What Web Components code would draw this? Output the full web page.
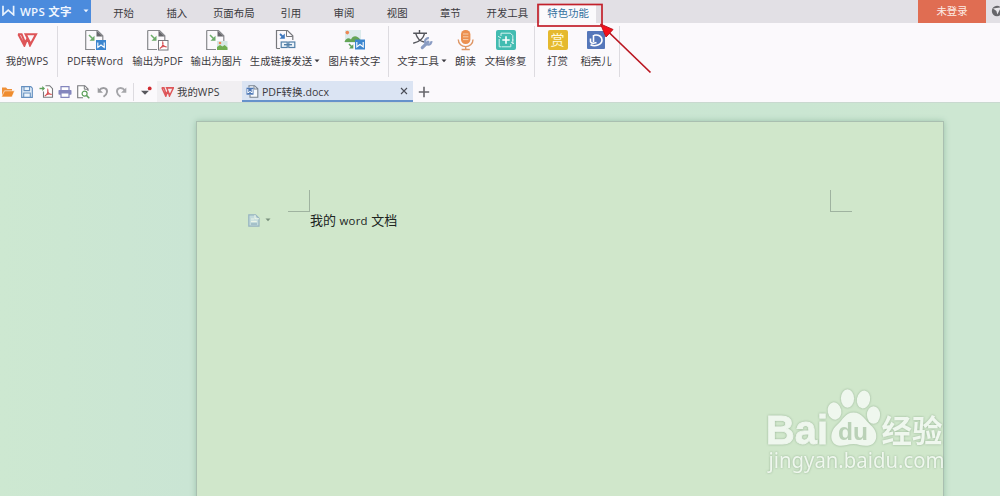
<!DOCTYPE html>
<html lang="zh-CN">
<head>
<meta charset="utf-8">
<title>WPS 文字</title>
<style>
    html, body {
        margin: 0;
        height: 100%;
        overflow: hidden;
    }
    body {
        font-family: "Open Sans", "Noto Sans CJK SC", sans-serif;
        font-size: 10.4px;
        color: #3b3a40;
    }
</style>
</head>
<body>
<wps-window></wps-window>

<script>
// width, height and drawing of every icon
const PAPER = '<path d="M1.7 1.5H13.5L18.8 6.8V12M1.7 1.5V20.5H11" fill="none" stroke="#88898d" stroke-width="1.2"/><path d="M12.5 1.5L18.8 7.6H12.5Z" fill="#66676b"/>';
const GREEN_ARROW = '<path d="M5 6L9.5 10.5" stroke="#6cab69" stroke-width="1.5"/><path d="M10.5 6.8V11.8H5.5Z" fill="#6cab69"/>';
const W_BADGE = '<rect width="10" height="10" fill="#3c86cf"/><path d="M1.8 2.4V7.4L5 5L8.2 7.4V2.4" fill="none" stroke="#fff" stroke-width="1.1"/>';
const PDF_CURVE = 'M1.8 8.2C4 7 5.6 4 4.8 1.8C4 4 6 6.8 8.6 6.6C6 5.5 3 6.8 1.8 8.2Z';
const W_LOGO = '<path d="M1 1.2H4.6L8.2 10.2L10.5 5.2L13 12.3L19 1.2H8.6L13 9.8M1.4 1.2L7.4 12.6L10.5 5.2" fill="none" stroke="#de5558" stroke-width="2.1"/>';

const ICONS = {
    wps: [21, 14, W_LOGO],
    wpsSmall: [13, 10, '<g transform="scale(.65 .74)">' + W_LOGO + '</g>'],
    brand: [13, 11, '<path d="M1 .8V9.8L6.2 5.2L11.6 9.8V.8" fill="none" stroke="#e8f2fd" stroke-width="1.7"/>'],
    pdfWord: [23, 22, PAPER + GREEN_ARROW + '<g transform="translate(12 11)">' + W_BADGE + '</g>'],
    outPdf: [23, 22, PAPER + GREEN_ARROW + '<rect x="12.5" y="11.5" width="9.5" height="9.5" fill="#fff" stroke="#77787c"/><g transform="translate(12 11.3)"><path d="' + PDF_CURVE + '" fill="none" stroke="#d64e52" stroke-width="1.1"/></g>'],
    outImage: [23, 22, PAPER + GREEN_ARROW + '<rect x="12" y="12" width="10.5" height="9" fill="#d5e8e4"/><path d="M12 21V18L15 16L17.5 17.6L19.6 16L22.5 18.4V21Z" fill="#70ae51"/><circle cx="15" cy="14" r="1.3" fill="#ee8854"/>'],
    link: [23, 22, '<path d="M2.5 19.5V1.5H13.5L18.8 6.8V11M2.5 19.5H6" fill="none" stroke="#77787c" stroke-width="1.2"/><path d="M12.5 1.5V7.5H18.8" fill="none" stroke="#77787c"/><path d="M6 5L9 8" stroke="#3f78bd" stroke-width="1.8"/><path d="M10.8 4.5V9.8H5.5Z" fill="#3f78bd"/><rect x="7.2" y="13" width="6" height="5.500" fill="#eef4fa" stroke="#527fa8" stroke-width="1.2"/><rect x="14.8" y="13" width="6" height="5.500" fill="#eef4fa" stroke="#527fa8" stroke-width="1.2"/><path d="M10 15.7H18" stroke="#527fa8" stroke-width="1.4"/>'],
    imageText: [23, 22, '<rect x="2" y="1" width="16" height="13" fill="#dcebec"/><path d="M1.5 13C3 8.5 6 8.5 8 10.4C10 6 14.5 6.5 17.5 11V13Z" fill="#64a555"/><circle cx="4.3" cy="3.6" r="1.8" fill="#ee8854"/><path d="M6 15L9.5 18.5" stroke="#5da05b" stroke-width="1.5"/><path d="M10.3 15.2V19.6H6Z" fill="#5da05b"/><g transform="translate(12 10.5)">' + W_BADGE + '</g>'],
    textTool: [22, 22, '<path d="M2.2 4.2H16M8.5 1V4M4.7 4.4C6 9 9 12.3 13 13M13.6 4.4C12.5 9.3 8 13 2.2 14.2" fill="none" stroke="#55565c" stroke-width="1.4"/><path d="M11.3 18.6L17 13.2" stroke="#8a9cc3" stroke-width="3.2" stroke-linecap="round"/><path d="M17.9 9.3A3.2 3.2 0 1 0 20.4 12.2" fill="none" stroke="#8a9cc3" stroke-width="2.2"/>'],
    mic: [17, 22, '<rect x="4" y="1" width="9.4" height="14" rx="4.5" fill="#ec9050"/><path d="M6 5H11.4M6 7.8H11.4M6 10.6H11.4" stroke="#f8d0ae"/><path d="M1.3 10.5C1.3 20 16 20 16 10.5M8.7 17V20.3M4.6 20.5H12.8" fill="none" stroke="#de9665" stroke-width="1.4"/>'],
    repair: [20, 20, '<rect width="20" height="20" rx="2" fill="#43bcb1"/><path d="M5 6V3.2H14.4L16.8 5.6V11M3.2 9V16.8H5M14.8 14V16.8H5.5M16.8 9V14M2 6.3L5 8M18 13.7L15 12" fill="none" stroke="#d5f2ef" stroke-width="1"/><path d="M10 6.3V13.7M6.3 10H13.7" stroke="#fff" stroke-width="1.6"/>'],
    docer: [18, 18, '<rect width="18" height="18" rx="1" fill="#5577ba"/><path d="M7 4.2C12 3.4 15 5.5 15 9C15 13.8 8 16 3.500 13.800M6.500 4V11M3.500 7.500V10.800C4.500 12.500 7 12.500 9.500 11.500" fill="none" stroke="#fff" stroke-width="1.6"/>'],
    open: [14, 12, '<path d="M1 10V1.5H5L6.4 3H11V5" fill="#ef9139"/><path d="M3.5 4.8H13.6L11 11H.5Z" fill="#ef8c2f" stroke="#fff" stroke-width=".6"/>'],
    save: [12, 12, '<path d="M.7.7H9.8L11.3 2.2V11.3H.7Z" fill="#edf5fc" stroke="#6590c0" stroke-width="1.2"/><path d="M3 1V4.6H8.6V1M2.7 11V7H9.3V11" fill="none" stroke="#6590c0" stroke-width="1.1"/>'],
    exportPdf: [15, 13, '<path d="M4.5 6.5V12.3H13.5V3.6L10.7.7H6.5" fill="#fff" stroke="#77787c" stroke-width="1.1"/><path d="M.5 3.5H4" stroke="#5da05b" stroke-width="1.4"/><path d="M3.3 1L6 3.5L3.3 6Z" fill="#5da05b"/><g transform="translate(4 2.8)"><path d="' + PDF_CURVE + '" fill="none" stroke="#d64e52" stroke-width="1.1"/></g>'],
    print: [14, 12, '<path d="M3 4V.7H11V4" fill="#fff" stroke="#8486bd" stroke-width="1.2"/><rect x=".5" y="4" width="13" height="4.8" rx=".8" fill="#8486bd"/><path d="M3 7H11V11.3H3Z" fill="#fff" stroke="#8486bd" stroke-width="1.2"/>'],
    preview: [13, 14, '<path d="M6 12.7H.7V.7H7.8L11 3.9V6" fill="#fff" stroke="#77787c" stroke-width="1.1"/><path d="M7.3.7V4.2H11" fill="none" stroke="#77787c"/><circle cx="7.6" cy="8.6" r="2.5" fill="#fff" stroke="#5da05b" stroke-width="1.2"/><path d="M9.4 10.4L12.3 13.2" stroke="#5da05b" stroke-width="1.5"/>'],
    undo: [12, 12, '<path d="M2 4.6C5 .5 10.5 1.6 10 6C9.8 8 8.3 9.6 6.5 10.8" fill="none" stroke="#9c9ca0" stroke-width="1.9"/><path d="M.7 1.5V6.7H6Z" fill="#9c9ca0"/>'],
    redo: [12, 12, '<g transform="matrix(-1 0 0 1 12 0)"><path d="M2 4.6C5 .5 10.5 1.6 10 6C9.8 8 8.3 9.6 6.5 10.8" fill="none" stroke="#a6a6aa" stroke-width="1.9"/><path d="M.7 1.5V6.7H6Z" fill="#a6a6aa"/></g>'],
    more: [12, 12, '<path d="M1 4.8H9L5 8.8Z" fill="#57575c"/><circle cx="9.7" cy="2.4" r="1.9" fill="#d02a30"/>'],
    doc: [13, 13, '<path d="M3 2.5V.7H8.5L11.8 3.8V12.2H4V10" fill="#f7fafd" stroke="#78828f" stroke-width="1.1"/><path d="M8 .7V4H11.8" fill="none" stroke="#78828f"/><rect x=".5" y="2.7" width="7" height="7" fill="#4d77b5"/><path d="M1.8 4V8L4 6.4L6.2 8V4" fill="none" stroke="#fff"/>'],
    close: [8, 8, '<path d="M1 1L7 7M7 1L1 7" stroke="#4a4d57" stroke-width="1.1"/>'],
    plus: [12, 12, '<path d="M6 .8V11.2M.8 6H11.2" stroke="#67676c" stroke-width="1.6"/>'],
    caret: [6, 4, '<path d="M.5.5H5.5L3 3.3Z" fill="currentColor"/>'],
    paste: [12, 13, '<path d="M.8.8H7.5L11 4.3V12.2H.8Z" fill="#c3dbdc" stroke="#96b3c0" stroke-width="1.2"/><path d="M7 1V4.8H11M3 5H6M3 7.4H8.8" fill="none" stroke="#ecf5e8" stroke-width="1.1"/><path d="M3 10H9" stroke="#86a6b6"/>'],
    globe: [12, 12, '<circle cx="6" cy="6" r="5.2" fill="#67676b"/><path d="M2 3.4L10 2.5L6.3 9.4L5.4 6Z" fill="#e8e7eb"/>']
};

class WpsIcon extends HTMLElement {
    constructor() {
        super();
        this.attachShadow({mode: 'open'});
    }

    connectedCallback() {
        const [w, h, art] = ICONS[this.getAttribute('name')];
        this.shadowRoot.innerHTML = `
            <style>
                :host { display: block; flex: none; width: ${w}px; height: ${h}px; }
                svg { display: block; }
            </style>
            <svg width="${w}" height="${h}" viewBox="0 0 ${w} ${h}">${art}</svg>`;
    }
}
customElements.define('wps-icon', WpsIcon);

class MenuTab extends HTMLElement {
    constructor() {
        super();
        this.attachShadow({mode: 'open'});
        this.shadowRoot.innerHTML = `
            <style>
                :host {
                    display: flex;
                    width: 53.2px;
                    height: 23px;
                    align-items: flex-end;
                    justify-content: center;
                    white-space: nowrap;
                }
                :host([wide]) { width: 60.8px; }
                span {
                    box-sizing: border-box;
                    height: 19px;
                    line-height: 18px;
                }
                :host([active]) span {
                    width: 56px;
                    text-align: center;
                    background: #fbfafc;
                    color: #34719f;
                }
            </style>
            <span><slot></slot></span>`;
    }
}
customElements.define('menu-tab', MenuTab);

class MenuBar extends HTMLElement {
    constructor() {
        super();
        this.attachShadow({mode: 'open'});
        this.shadowRoot.innerHTML = `
            <style>
                :host {
                    display: flex;
                    height: 23px;
                    background: #e2e0e5;
                    overflow: hidden;
                }
                .brand {
                    display: flex;
                    align-items: center;
                    box-sizing: border-box;
                    width: 91px;
                    padding: 0 0 2px 2px;
                    gap: 5px;
                    background: #4b8bdd;
                    color: #eff6ff;
                    font-size: 11.5px;
                    font-weight: 600;
                    white-space: nowrap;
                }
                .brand span { width: 55px; letter-spacing: .25px; }
                .drop {
                    display: flex;
                    align-items: center;
                    align-self: stretch;
                    padding-left: 3px;
                }
                nav { display: flex; margin-left: 6px; }
                .login {
                    margin-left: auto;
                    width: 68px;
                    line-height: 22px;
                    text-align: center;
                    background: #e06d52;
                    color: #fdece6;
                }
                .globe { width: 14px; overflow: hidden; padding: 5px 0 0 5px; box-sizing: border-box; }
            </style>
            <div class="brand">
                <wps-icon name="brand"></wps-icon><span>WPS 文字</span>
                <div class="drop"><wps-icon name="caret"></wps-icon></div>
            </div>
            <nav>
                <menu-tab>开始</menu-tab>
                <menu-tab>插入</menu-tab>
                <menu-tab wide>页面布局</menu-tab>
                <menu-tab>引用</menu-tab>
                <menu-tab>审阅</menu-tab>
                <menu-tab>视图</menu-tab>
                <menu-tab>章节</menu-tab>
                <menu-tab wide>开发工具</menu-tab>
                <menu-tab wide active>特色功能</menu-tab>
            </nav>
            <div class="login">未登录</div>
            <div class="globe"><wps-icon name="globe"></wps-icon></div>`;
    }
}
customElements.define('menu-bar', MenuBar);

class RibbonButton extends HTMLElement {
    constructor() {
        super();
        this.attachShadow({mode: 'open'});
    }

    connectedCallback() {
        const drop = this.hasAttribute('drop') ? '<wps-icon name="caret"></wps-icon>' : '';
        this.shadowRoot.innerHTML = `
            <style>
                :host {
                    display: flex;
                    flex: none;
                    flex-direction: column;
                    align-items: center;
                }
                .art {
                    display: flex;
                    align-items: center;
                    height: 22px;
                }
                .label {
                    display: flex;
                    align-items: center;
                    gap: 2px;
                    height: 16px;
                    margin-top: 2px;
                    line-height: 16px;
                    white-space: nowrap;
                }
            </style>
            <div class="art"><slot name="icon"></slot></div>
            <div class="label"><slot></slot>${drop}</div>`;
    }
}
customElements.define('ribbon-button', RibbonButton);

class RibbonBar extends HTMLElement {
    constructor() {
        super();
        this.attachShadow({mode: 'open'});

        // label, icon, column width; null is a separator
        const items = [
            ['我的WPS', 'wps', 54], null,
            ['PDF转Word', 'pdfWord', 66], ['输出为PDF', 'outPdf', 59],
            ['输出为图片', 'outImage', 59], ['生成链接发送', 'link', 78, 'drop'],
            ['图片转文字', 'imageText', 61], null,
            ['文字工具', 'textTool', 58, 'drop'], ['朗读', 'mic', 29],
            ['文档修复', 'repair', 51], null,
            ['打赏', 'reward', 37], ['稻壳儿', 'docer', 40], null
        ];
        const html = items.map((item) => {
            if (!item) return '<i></i>';
            const [label, icon, width, drop = ''] = item;
            const art = icon === 'reward'
                ? '<b slot="icon">赏</b>'
                : `<wps-icon slot="icon" name="${icon}"></wps-icon>`;
            return `<ribbon-button ${drop} style="width:${width}px">${art}${label}</ribbon-button>`;
        }).join('');

        this.shadowRoot.innerHTML = `
            <style>
                :host {
                    display: flex;
                    box-sizing: border-box;
                    height: 58px;
                    padding-top: 6px;
                    background: #fbf9fc;
                }
                i {
                    flex: none;
                    width: 1px;
                    height: 51px;
                    margin: -3px 4px 0 3px;
                    background: #dddbe0;
                }
                b {
                    width: 20px;
                    height: 20px;
                    border-radius: 2px;
                    background: #e5b92e;
                    color: #fff9dc;
                    font-size: 14px;
                    font-weight: 400;
                    line-height: 19px;
                    text-align: center;
                }
            </style>
            ${html}`;
    }
}
customElements.define('ribbon-bar', RibbonBar);

class QuickBar extends HTMLElement {
    constructor() {
        super();
        this.attachShadow({mode: 'open'});
        const tools = ['open', 'save', 'exportPdf', 'print', 'preview', 'undo', 'redo'];
        this.shadowRoot.innerHTML = `
            <style>
                :host {
                    display: flex;
                    align-items: center;
                    height: 21px;
                    background: #fbf9fc;
                    border-bottom: 1px solid #c9d9d0;
                }
                .tools {
                    display: grid;
                    grid-template-columns: 16px 21px 19px 18px 19px 19px 18px;
                    align-items: center;
                    justify-items: center;
                }
                .more {
                    display: flex;
                    align-items: center;
                    height: 18px;
                    margin-left: 3px;
                    padding: 0 5px 0 6px;
                    border-left: 1px solid #dddbe0;
                }
                .tab {
                    display: flex;
                    align-items: center;
                    box-sizing: border-box;
                    height: 21px;
                    gap: 3px;
                    white-space: nowrap;
                }
                .home {
                    width: 85px;
                    padding-left: 4px;
                    background: #f1eff2;
                }
                .file {
                    width: 171px;
                    padding: 1px 5px 0 4px;
                    background: #dbe4f3;
                    border-bottom: 2px solid #6692cb;
                    font-size: 10.6px;
                }
                .file wps-icon:last-child { margin-left: auto; }
                .add { margin-left: 5px; }
            </style>
            <div class="tools">${tools.map((name) => `<wps-icon name="${name}"></wps-icon>`).join('')}</div>
            <div class="more"><wps-icon name="more"></wps-icon></div>
            <div class="tab home"><wps-icon name="wpsSmall"></wps-icon><span>我的WPS</span></div>
            <div class="tab file">
                <wps-icon name="doc"></wps-icon><span>PDF转换.docx</span><wps-icon name="close"></wps-icon>
            </div>
            <wps-icon class="add" name="plus"></wps-icon>`;
    }
}
customElements.define('quick-bar', QuickBar);

class DocumentPage extends HTMLElement {
    constructor() {
        super();
        this.attachShadow({mode: 'open'});
        this.shadowRoot.innerHTML = `
            <style>
                :host {
                    display: block;
                    box-sizing: border-box;
                    width: 748px;
                    height: 400px;
                    padding: 68px 91px 0 51px;
                    background: #d0e7cb;
                    border: 1px solid #a9bfb0;
                    box-shadow: 0 0 6px #9cc2ab;
                }
                .corners {
                    display: flex;
                    justify-content: space-between;
                    padding-left: 40px;
                }
                .corners span {
                    box-sizing: border-box;
                    width: 22px;
                    height: 22px;
                    border: 0 solid #9fb3a0;
                    border-width: 0 1px 1px 0;
                }
                .corners span + span { border-width: 0 0 1px 1px; }
                .line {
                    display: flex;
                    align-items: center;
                    height: 16px;
                    color: #78907c;
                }
                .line wps-icon + wps-icon { margin-left: 5px; }
                p {
                    margin: 0 0 0 39px;
                    color: #20251f;
                    font-size: 13px;
                    line-height: 16px;
                    white-space: pre;
                }
            </style>
            <div class="corners"><span></span><span></span></div>
            <div class="line">
                <wps-icon name="paste"></wps-icon><wps-icon name="caret"></wps-icon>
                <p><slot></slot></p>
            </div>`;
    }
}
customElements.define('document-page', DocumentPage);

class BaiduMark extends HTMLElement {
    constructor() {
        super();
        this.attachShadow({mode: 'open'});
        this.shadowRoot.innerHTML = `
            <style>
                :host {
                    display: block;
                    width: 190px;
                    height: 96px;
                    filter: drop-shadow(0 0 1px rgba(120, 150, 120, .65));
                }
                svg { display: block; }
                .bold { font-family: "Liberation Sans", sans-serif; font-weight: 700; }
                .cjk { font-family: "Noto Sans CJK SC", sans-serif; font-weight: 700; }
                .url { font-family: "Noto Sans", sans-serif; }
            </style>
            <svg width="190" height="96" viewBox="760 385 190 96" fill="#eff7ee">
                <text class="bold" x="766" y="443.5" font-size="40" textLength="62" lengthAdjust="spacingAndGlyphs" stroke="#eff7ee" stroke-width=".8">Bai</text>
                <ellipse cx="834.5" cy="411" rx="6.8" ry="8.8" transform="rotate(-12 834.5 411)"/>
                <ellipse cx="847.5" cy="398.500" rx="6.6" ry="9.2"/>
                <ellipse cx="863.5" cy="399.500" rx="6.6" ry="9" transform="rotate(10 863.5 399.500)"/>
                <ellipse cx="873.5" cy="415" rx="6.6" ry="8.8"/>
                <path d="M853.500 412.500C862 412.500 865 420 871 425.500C879 432 878 444.500 868 445.700C862 446.500 859 444 853.500 444C847 444 843 447 837 445.200C829 442 830 431 837 425C843 420 845 412.500 853.500 412.500Z"/>
                <text class="bold" x="838" y="440" font-size="24" fill="#bad1b7" textLength="30" lengthAdjust="spacingAndGlyphs">du</text>
                <text class="cjk" x="881.5" y="441.5" font-size="31" textLength="61" lengthAdjust="spacingAndGlyphs">经验</text>
                <text class="url" x="768.500" y="468" font-size="21" textLength="176" lengthAdjust="spacingAndGlyphs">jingyan.baidu.com</text>
            </svg>`;
    }
}
customElements.define('baidu-mark', BaiduMark);

class TabCallout extends HTMLElement {
    constructor() {
        super();
        this.attachShadow({mode: 'open'});
        this.shadowRoot.innerHTML = `
            <style>
                :host { display: block; width: 120px; height: 76px; }
                svg { display: block; }
            </style>
            <svg width="120" height="76" viewBox="535 0 120 76">
                <rect x="538" y="4.5" width="64" height="21.5" fill="none" stroke="#c2202b" stroke-width="1.7"/>
                <path d="M607 30.5L650.5 72.5" stroke="#ba1620" stroke-width="1.7"/>
                <path d="M600.5 24L613 29.5L606 37Z" fill="#f5101b" stroke="#bd1720"/>
            </svg>`;
    }
}
customElements.define('tab-callout', TabCallout);

class WpsWindow extends HTMLElement {
    constructor() {
        super();
        this.attachShadow({mode: 'open'});
        this.shadowRoot.innerHTML = `
            <style>
                :host {
                    display: flex;
                    flex-direction: column;
                    position: relative;
                    width: 1000px;
                    height: 496px;
                    overflow: hidden;
                }
                main {
                    flex: 1;
                    min-height: 0;
                    padding: 18px 0 0 196px;
                    background: linear-gradient(90deg, #cde8d1, #cae5d4 19%, #cae6d2 80%, #cde7d2 95%);
                }
                tab-callout { position: absolute; left: 535px; top: 0; }
                baidu-mark { position: absolute; left: 760px; top: 385px; }
                em { font-style: normal; font-size: 11.4px; letter-spacing: .3px; }
            </style>
            <menu-bar></menu-bar>
            <ribbon-bar></ribbon-bar>
            <quick-bar></quick-bar>
            <main>
                <document-page>我的 <em>word</em> 文档</document-page>
            </main>
            <tab-callout></tab-callout>
            <baidu-mark></baidu-mark>`;
    }
}
customElements.define('wps-window', WpsWindow);
</script>
</body>
</html>
